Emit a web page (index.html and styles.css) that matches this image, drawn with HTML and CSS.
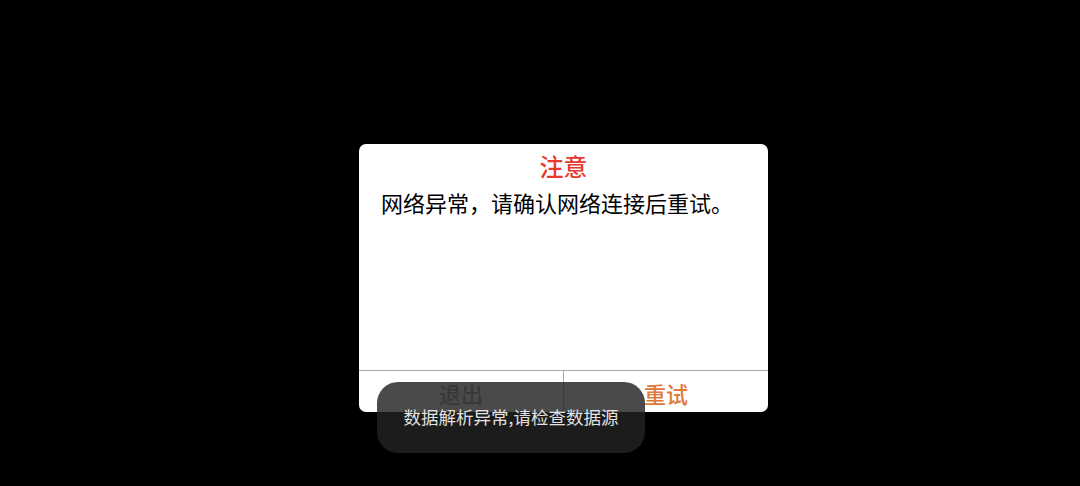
FILE: index.html
```html
<!DOCTYPE html>
<html lang="zh-CN">
<head>
<meta charset="utf-8">
<link rel="stylesheet" href="styles.css">
</head>
<body>
<div class="screen">
  <div class="dialog">
    <div class="title">注意</div>
    <div class="message">网络异常，请确认网络连接后重试。</div>
    <div class="spacer"></div>
    <div class="footer">
      <div class="btn btn-cancel">退出</div>
      <div class="btn btn-ok">重试</div>
    </div>
  </div>
  <div class="toast">数据解析异常,请检查数据源</div>
</div>
</body>
</html>
```
FILE: styles.css
```css
html, body {
  margin: 0;
  padding: 0;
  background: #000;
  width: 1080px;
  height: 486px;
  overflow: hidden;
  font-family: "Noto Sans CJK SC", "Noto Sans", sans-serif;
}
.screen {
  position: relative;
  width: 1080px;
  height: 486px;
  padding: 144px 0 0 359px;
  box-sizing: border-box;
}
.dialog {
  width: 409px;
  height: 268px;
  background: #fff;
  border-radius: 7px;
  display: flex;
  flex-direction: column;
  overflow: hidden;
}
.title {
  padding-top: 6px;
  height: 32px;
  line-height: 32px;
  text-align: center;
  color: #e8392f;
  font-size: 24px;
  font-weight: 500;
}
.message {
  padding-left: 22px;
  line-height: 40px;
  font-size: 22px;
  color: #000;
}
.spacer {
  flex: 1;
}
.footer {
  height: 41px;
  border-top: 1px solid #a8a8a8;
  display: flex;
}
.btn {
  flex: 1;
  text-align: center;
  font-size: 22px;
  line-height: 44px;
  font-weight: 500;
}
.btn-cancel {
  color: #999;
  border-right: 1px solid #a8a8a8;
}
.btn-ok {
  color: #e0783a;
}
.toast {
  position: absolute;
  left: 377px;
  top: 382px;
  width: 268px;
  height: 71px;
  border-radius: 21px;
  background: rgba(34, 34, 34, 0.82);
  color: #e2e2e2;
  font-size: 17.5px;
  text-align: center;
  line-height: 70px;
  box-sizing: border-box;
}
```
